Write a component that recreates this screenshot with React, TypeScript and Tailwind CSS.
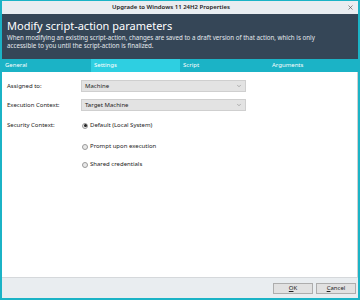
import { ChevronDown, X } from 'lucide-react'

const tabs = ['General', 'Settings', 'Script', 'Arguments']

function Select({ value }: { value: string }) {
  return (
    <div className="flex h-[12px] w-[165px] items-center justify-between border border-[#cfcfcf] bg-[#e3e3e3] pl-[3px] pr-[3px] text-[6px] text-[#222]">
      <span>{value}</span>
      <ChevronDown size={6} strokeWidth={2} className="text-[#777]" />
    </div>
  )
}

function Radio({ checked, label }: { checked?: boolean; label: string }) {
  return (
    <div className="flex h-[9px] items-center gap-[2px] text-[6px] text-[#222]">
      <span className="flex h-[6px] w-[6px] items-center justify-center rounded-full border border-[#9a9a9a] bg-[#e8e8e8]">
        {checked ? <span className="h-[3px] w-[3px] rounded-full bg-[#222]" /> : null}
      </span>
      <span>{label}</span>
    </div>
  )
}

export default function App() {
  return (
    <div
      className="flex h-[300px] w-[360px] flex-col border-t border-l-2 border-r-2 border-b-2 border-[#1bb3c6] bg-white"
      style={{ fontFamily: '"Noto Sans", "Open Sans", sans-serif' }}
    >
      <div className="relative flex h-[13px] items-center justify-center bg-[#e9edf1] text-[6px] font-semibold text-[#222]">
        <span className="ml-[-18px]">Upgrade to Windows 11 24H2 Properties</span>
        <X size={7} strokeWidth={2} className="absolute right-[4px] top-[3px] text-[#444]" />
      </div>

      <div className="h-[45px] bg-[#354657] px-[5px] pt-[4px] text-white">
        <h1 className="text-[11px] leading-[15px]">Modify script-action parameters</h1>
        <p className="mt-[1px] text-[6.2px] leading-[8px] text-[#e4e9ee]">
          When modifying an existing script-action, changes are saved to a draft version of that action, which is only
          <br />
          accessible to you until the script-action is finalized.
        </p>
      </div>

      <div className="grid h-[13px] grid-cols-4 bg-[#1bb3c6] text-[6px] text-white">
        {tabs.map((tab) => (
          <div
            key={tab}
            className={`flex items-center pl-[3px] ${tab === 'Settings' ? 'bg-[#2ecfe1]' : ''}`}
          >
            {tab}
          </div>
        ))}
      </div>

      <div className="flex-1 border-r border-[#d0d0d0] pl-[5px] pt-[8px] text-[6px] text-[#222]">
        <div className="flex items-center">
          <span className="w-[74px]">Assigned to:</span>
          <Select value="Machine" />
        </div>
        <div className="mt-[7px] flex items-center">
          <span className="w-[74px]">Execution Context:</span>
          <Select value="Target Machine" />
        </div>
        <div className="mt-[10px] flex items-start">
          <span className="w-[75px] leading-[9px]">Security Context:</span>
          <div className="flex flex-col">
            <Radio checked label="Default (Local System)" />
            <div className="mt-[12px]">
              <Radio label="Prompt upon execution" />
            </div>
            <div className="mt-[9px]">
              <Radio label="Shared credentials" />
            </div>
          </div>
        </div>
      </div>

      <div className="flex h-[21px] items-center justify-end gap-[3px] border-t border-[#d5d8db] bg-[#e9edf0] pr-[2px]">
        <button className="h-[11px] w-[40px] border border-[#adadad] bg-[#e1e1e1] text-[6px] text-[#222]">
          <span className="underline">O</span>K
        </button>
        <button className="h-[11px] w-[40px] border border-[#adadad] bg-[#e1e1e1] text-[6px] text-[#222]">
          <span className="underline">C</span>ancel
        </button>
      </div>
    </div>
  )
}
